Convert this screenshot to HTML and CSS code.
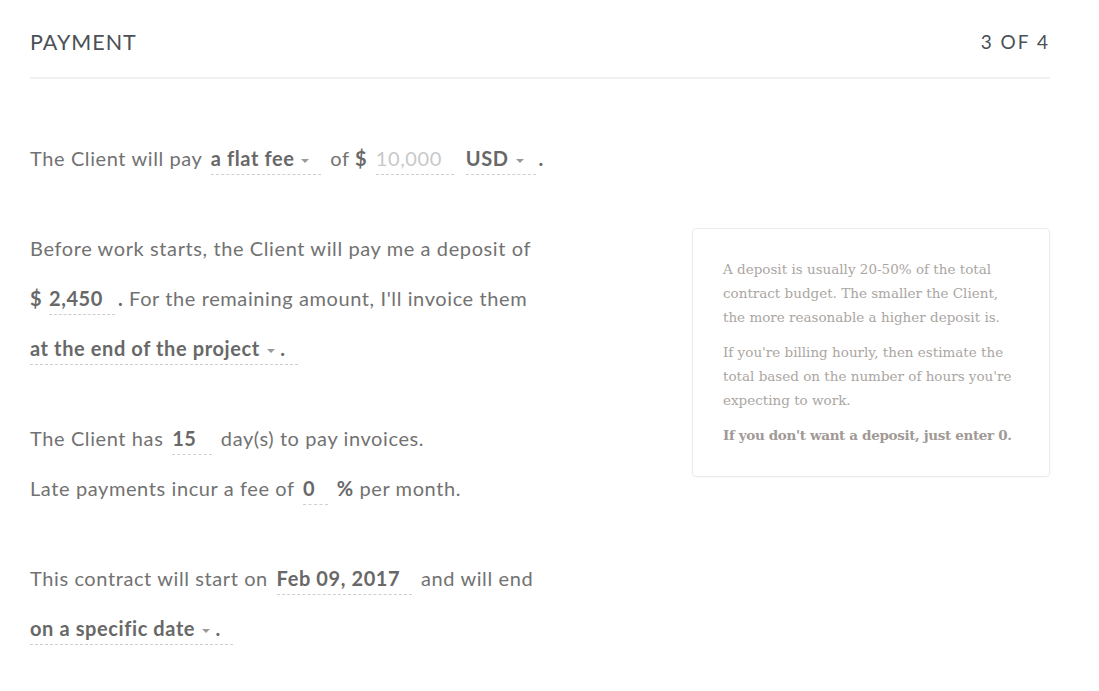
FILE: index.html
```html
<!DOCTYPE html>
<html>
<head>
<meta charset="utf-8">
<link rel="stylesheet" href="styles.css">
</head>
<body>
<div class="page">
  <header class="head">
    <h1 class="title">PAYMENT</h1>
    <span class="step">3 OF 4</span>
  </header>
  <div class="content">
    <div class="form">
      <p class="para">The Client will pay <span class="field sel">a flat fee<i class="caret"></i></span> of <b class="cur">$</b> <span class="field ph">10,000</span> <span class="field sel">USD<i class="caret"></i></span><b class="dot">.</b></p>
      <p class="para">Before work starts, the Client will pay me a deposit of <span class="nowrap"><b class="cur">$</b> <span class="field">2,450</span><b class="dot">.</b></span> For the remaining amount, I'll invoice them <span class="field sel first">at the end of the project<i class="caret"></i> <b class="dot">.</b></span></p>
      <p class="para">The Client has <span class="field w40">15</span> day(s) to pay invoices.<br>Late payments incur a fee of <span class="field w24">0</span> <b class="pct">%</b> per month.</p>
      <p class="para">This contract will start on <span class="field">Feb 09, 2017</span> and will end <span class="field sel first">on a specific date<i class="caret"></i> <b class="dot">.</b></span></p>
    </div>
    <aside class="tip">
      <p>A deposit is usually 20-50% of the total contract budget. The smaller the Client, the more reasonable a higher deposit is.</p>
      <p>If you're billing hourly, then estimate the total based on the number of hours you're expecting to work.</p>
      <p class="strong">If you don't want a deposit, just enter 0.</p>
    </aside>
  </div>
</div>
</body>
</html>
```
FILE: styles.css
```css
html, body {
  margin: 0;
  background: #fff;
}
.page {
  width: 1020px;
  margin-left: 30px;
  font-family: "Lato", "Liberation Sans", sans-serif;
}
.head {
  display: flex;
  justify-content: space-between;
  align-items: center;
  padding: 28px 0 21px;
  border-bottom: 2px solid #f1f1f1;
}
.title {
  margin: 0;
  font-size: 21.5px;
  font-weight: 400;
  line-height: 28px;
  letter-spacing: 1px;
  color: #4b5056;
}
.step {
  font-size: 19px;
  line-height: 28px;
  letter-spacing: 2px;
  color: #4b5056;
}
.content {
  display: flex;
  justify-content: space-between;
  align-items: flex-start;
  padding-top: 54px;
}
.form {
  width: 535px;
}
.para {
  margin: 0 0 40px;
  font-size: 20px;
  line-height: 50px;
  letter-spacing: 0.6px;
  color: #727272;
}
.para b {
  font-weight: 700;
  color: #686868;
}
.nowrap {
  white-space: nowrap;
}
.field {
  display: inline-block;
  line-height: 26px;
  padding: 0 12px 3px 0;
  border-bottom: 1px dashed #cfcfcf;
  font-weight: 700;
  color: #686868;
  margin: 0 3px;
}
.field.first {
  margin-left: 0;
}
.nowrap .field {
  margin-left: 1px;
}
.field.ph {
  font-weight: 400;
  color: #c9c9c9;
}
.field.w40 {
  min-width: 28px;
}
.field.w24 {
  min-width: 13px;
}
.caret {
  display: inline-block;
  width: 0;
  height: 0;
  margin-left: 7px;
  vertical-align: middle;
  border-left: 4px solid transparent;
  border-right: 4px solid transparent;
  border-top: 4px solid #9a9a9a;
}
.tip {
  width: 296px;
  margin-top: 95px;
  padding: 28px 30px 29px;
  border: 1px solid #ebebeb;
  border-radius: 4px;
  box-shadow: 0 1px 2px rgba(0,0,0,0.03);
  font-family: "DejaVu Serif", serif;
  font-size: 13.5px;
  line-height: 24px;
  color: #aba6a2;
}
.tip p {
  margin: 0 0 11px;
}
.tip p:last-child {
  margin-bottom: 0;
}
.tip .strong {
  font-weight: 700;
  letter-spacing: -0.35px;
  color: #9f9a96;
}
```
